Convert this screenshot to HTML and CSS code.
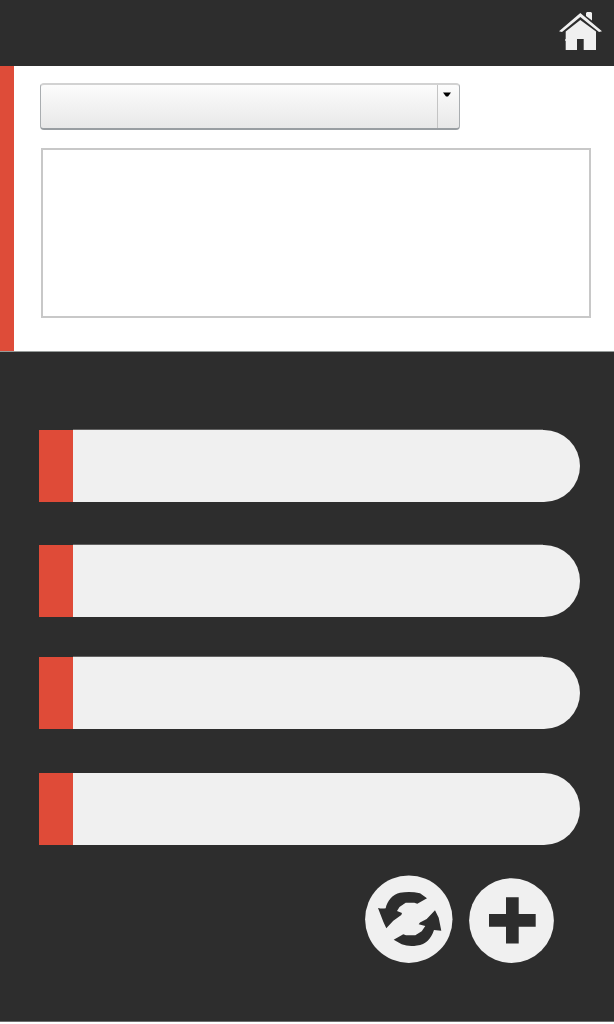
FILE: index.html
```html
<!DOCTYPE html>
<html lang="en">
<head>
<meta charset="utf-8">
<title>Home</title>
<link rel="stylesheet" href="styles.css">
</head>
<body>
<div class="app">
  <header class="header">
    <svg class="home" width="44" height="40" viewBox="0 0 44 40">
      <path d="M28 2L29 1H33L34 2V9.500L28 5Z"/>
      <path d="M1 20.300L22.300 2L44 20.300L41 21L22.300 6L4 21Z"/>
      <path d="M7.700 20.500L22.300 9L38 20.500V39H25.700V28H19V39H7.700Z"/>
      <path d="M7.300 28H8V30H7.300Z"/>
    </svg>
  </header>
  <section class="panel">
    <div class="select">
      <div class="select-value"></div>
      <div class="select-arrow"><svg width="8" height="5" viewBox="0 0 8 5"><path d="M0 .5H8L5 4.500H3Z"/></svg></div>
    </div>
    <div class="textbox"></div>
  </section>
  <main class="list">
    <div class="row row-lit"></div>
    <div class="row row-lit"></div>
    <div class="row row-lit"></div>
    <div class="row"></div>
  </main>
  <footer class="actions">
    <svg width="88" height="88" viewBox="0 0 88 88">
      <circle class="disc" cx="43.800" cy="44.200" r="43.700"/>
      <path class="glyph" d="M13 33Q17 34 20.700 33.300C22 26 28 19 35 17.800Q45 16 55 18.300L62 23.300L52.300 28.700L49.300 27.700H40.700L34.500 32L32 36L37 38L36.300 40L28.300 45.700L21.300 53.300L18.300 46.700Z"/>
      <path class="glyph" d="M70 35.300L73.700 42.700L76.300 55.700L69 55C66 64 61 69.500 52 70.500Q44 72 36.700 69.300L28.700 64.700L38.300 59.300L41 60.300H50.300L56.700 56.300L60.300 51L53.700 49.300L55 47.500L61.700 44Z"/>
    </svg>
    <svg width="85" height="86" viewBox="0 0 85 86">
      <circle class="disc" cx="42.500" cy="43.600" r="42.400"/>
      <path class="glyph" d="M37 20.200H49.700V37H66.700V49.700H49.700V66.400H37V49.700H20V37H37Z"/>
    </svg>
  </footer>
</div>
</body>
</html>
```
FILE: styles.css
```css
* { box-sizing: border-box; }
body { margin: 0; background: #fff; }
.app {
  height: 1022px;
  background: #2d2d2d;
  border-bottom: 1px solid #6e6e6e;
}
.header {
  height: 66px;
  padding: 11px 12px 0 0;
  display: flex;
  justify-content: flex-end;
}
.home { fill: #f0f0f0; }
.panel {
  height: 286px;
  padding: 17px 23px 0 40px;
  background: linear-gradient(90deg, #de4c39 14px, #fff 14px) border-box;
  border-bottom: 1px solid #969b99;
}
.select {
  width: 420px;
  height: 47px;
  display: flex;
  border: 1px solid;
  border-color: #d2d2d2 #a9adb0 #999ea2 #a9adb0;
  border-width: 2px 1px;
  border-radius: 4px;
  background: linear-gradient(#fcfcfc, #e8e8e8);
}
.select-value { flex: 1; border-right: 1px solid #c4c4c4; }
.select-arrow {
  width: 21px;
  padding: 7px 0 0 5px;
  line-height: 0;
}
.textbox {
  height: 170px;
  margin: 18px 0 0 1px;
  border: 2px solid #c8c8c8;
}
.list {
  padding: 78px 34px 0 39px;
  display: grid;
  grid-template-rows: 115px 112px 116px 72px;
}
.row {
  height: 72px;
  border-left: 34px solid #df4b38;
  border-radius: 0 36px 36px 0;
  background: #f0f0f0;
}
.row-lit { position: relative; }
.row-lit::before {
  content: "";
  position: absolute;
  top: -1px;
  left: 0;
  right: 37px;
  height: 1px;
  background: #626262;
}
.actions {
  padding: 30px 60px 0 0;
  display: flex;
  justify-content: flex-end;
  align-items: flex-end;
  gap: 16px;
}
.disc { fill: #f0f0f0; }
.glyph { fill: #2d2d2d; }
```
